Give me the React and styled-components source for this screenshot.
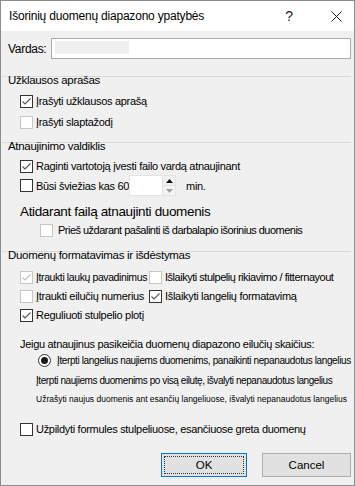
import styled, { createGlobalStyle } from "styled-components";

const GlobalStyle = createGlobalStyle`
  html, body {
    margin: 0;
    padding: 0;
    background: #ffffff;
  }
  body {
    font-family: "Liberation Sans", Arial, sans-serif;
    color: #000;
  }
`;

const Window = styled.div`
  width: 355px;
  height: 486px;
  box-sizing: border-box;
  border: 1px solid #8c8c8c;
  background: #f0f0f0;
  display: flex;
  flex-direction: column;
  font-size: 11px;
  letter-spacing: -0.3px;
`;

const TitleBar = styled.div`
  height: 30px;
  background: #ffffff;
  display: flex;
  align-items: center;
  padding-left: 8px;
  font-size: 12px;
  letter-spacing: -0.2px;
`;

const TitleText = styled.div`
  flex: 1;
`;

const TitleButton = styled.div`
  width: ${(p) => p.$w}px;
  height: 30px;
  display: flex;
  align-items: center;
  justify-content: center;
  font-size: 14px;
  color: #222;
`;

const Body = styled.div`
  flex: 1;
  display: flex;
  flex-direction: column;
  padding: 0 3px 0 7px;
`;

const Row = styled.div`
  display: flex;
  align-items: center;
  height: ${(p) => p.$h || 16}px;
  margin-top: ${(p) => p.$mt || 0}px;
  margin-left: ${(p) => p.$indent || 0}px;
  gap: ${(p) => (p.$gap === undefined ? 3 : p.$gap)}px;
  white-space: nowrap;
`;

const NameLabel = styled.span`
  width: 43px;
  font-size: 12px;
`;

const NameInput = styled.div`
  flex: 1;
  height: 21px;
  box-sizing: border-box;
  border: 1px solid #acacac;
  background: #fff;
  padding: 2px 3px;
`;

const NameBlur = styled.div`
  width: 74px;
  height: 13px;
  background: #efefef;
`;

const GroupHeader = styled.div`
  height: 16px;
  margin-top: ${(p) => p.$mt}px;
  margin-left: -6px;
  padding-left: 6px;
  display: flex;
  align-items: center;
  background: linear-gradient(#d9d9d9, #d9d9d9) no-repeat 0 4px / 100% 1px;
  white-space: nowrap;
`;

const HeaderText = styled.span`
  font-size: 11.5px;
`;

const Box = styled.span`
  width: 13px;
  height: 13px;
  flex: none;
  box-sizing: border-box;
  border: 1px solid ${(p) => (p.$disabled ? "#c6c6c6" : "#333")};
  background: #fff;
  display: flex;
  align-items: center;
  justify-content: center;
`;

const Check = ({ checked, disabled }) => (
  <Box $disabled={disabled}>
    {checked && (
      <svg width="11" height="11" viewBox="0 0 11 11">
        <path
          d="M1.5 5.5 L4 8 L9.5 2.5"
          fill="none"
          stroke={disabled ? "#bdbdbd" : "#555"}
          strokeWidth="1.1"
        />
      </svg>
    )}
  </Box>
);

const Radio = styled.span`
  width: 13px;
  height: 13px;
  flex: none;
  box-sizing: border-box;
  border-radius: 50%;
  border: 1px solid #333;
  background: #fff;
  display: flex;
  align-items: center;
  justify-content: center;
  &::after {
    content: "";
    width: 7px;
    height: 7px;
    border-radius: 50%;
    background: #1a1a1a;
  }
`;

const SpinBox = styled.div`
  display: flex;
  height: 21px;
  margin-left: -3px;
`;

const SpinField = styled.div`
  width: 33px;
  box-sizing: border-box;
  border: 1px solid #e3e3e3;
  border-right: none;
  background: #fff;
`;

const SpinButtons = styled.div`
  width: 14px;
  display: flex;
  flex-direction: column;
  border: 1px solid #e3e3e3;
  box-sizing: border-box;
  background: #fff;
`;

const SpinButton = styled.div`
  flex: 1;
  display: flex;
  align-items: center;
  justify-content: center;
  background: ${(p) => (p.$down ? "#f4f4f4" : "#f0f0f0")};
  border-bottom: ${(p) => (p.$down ? "none" : "1px solid #e3e3e3")};
`;

const Arrow = ({ down }) => (
  <svg width="7" height="4" viewBox="0 0 7 4">
    {down ? (
      <path d="M0 0 L7 0 L3.5 4 Z" fill="#a0a0a0" />
    ) : (
      <path d="M0 4 L7 4 L3.5 0 Z" fill="#111" />
    )}
  </svg>
);

const MinText = styled.span`
  margin-left: 7px;
`;

const BigText = styled.div`
  height: 18px;
  margin-top: 6px;
  margin-left: 12px;
  display: flex;
  align-items: center;
  font-size: 13.5px;
  letter-spacing: -0.35px;
  white-space: nowrap;
`;

const SmallText = styled.span`
  font-size: ${(p) => p.$size}px;
  letter-spacing: ${(p) => p.$ls}px;
`;

const FormatGrid = styled.div`
  display: grid;
  grid-template-columns: 129px 1fr;
  grid-auto-rows: 16px;
  row-gap: 3px;
  margin-top: 6px;
  margin-left: 12px;
`;

const Cell = styled.div`
  display: flex;
  align-items: center;
  gap: 3px;
  white-space: nowrap;
`;

const ButtonRow = styled.div`
  display: flex;
  justify-content: flex-end;
  gap: 15px;
  margin-top: 16px;
`;

const Button = styled.div`
  width: ${(p) => p.$w}px;
  height: 24px;
  box-sizing: border-box;
  border: 1px solid ${(p) => (p.$primary ? "#0078d7" : "#adadad")};
  background: #e1e1e1;
  padding: 2px;
  display: flex;
  font-size: 11.5px;
  letter-spacing: 0;
`;

const ButtonFace = styled.div`
  flex: 1;
  display: flex;
  align-items: center;
  justify-content: center;
  border: 1px dotted ${(p) => (p.$focus ? "#333" : "transparent")};
`;

export default function App() {
  return (
    <>
      <GlobalStyle />
      <Window>
        <TitleBar>
          <TitleText>Išorinių duomenų diapazono ypatybės</TitleText>
          <TitleButton $w={58}>?</TitleButton>
          <TitleButton $w={36}>
            <svg width="11" height="11" viewBox="0 0 11 11">
              <path d="M0.5 0.5 L10.5 10.5 M10.5 0.5 L0.5 10.5" stroke="#222" strokeWidth="1" />
            </svg>
          </TitleButton>
        </TitleBar>
        <Body>
          <Row $h={21} $mt={7} $gap={0}>
            <NameLabel>Vardas:</NameLabel>
            <NameInput>
              <NameBlur />
            </NameInput>
          </Row>

          <GroupHeader $mt={13}>
            <HeaderText>Užklausos aprašas</HeaderText>
          </GroupHeader>
          <Row $mt={5} $indent={12}>
            <Check checked />
            <span>Įrašyti užklausos aprašą</span>
          </Row>
          <Row $mt={5} $indent={12}>
            <Check disabled />
            <span>Įrašyti slaptažodį</span>
          </Row>

          <GroupHeader $mt={8}>
            <HeaderText>Atnaujinimo valdiklis</HeaderText>
          </GroupHeader>
          <Row $mt={4} $indent={12}>
            <Check checked />
            <span>Raginti vartotoją įvesti failo vardą atnaujinant</span>
          </Row>
          <Row $h={21} $mt={1} $indent={12}>
            <Check />
            <span>Būsi šviežias kas 60</span>
            <SpinBox>
              <SpinField />
              <SpinButtons>
                <SpinButton>
                  <Arrow />
                </SpinButton>
                <SpinButton $down>
                  <Arrow down />
                </SpinButton>
              </SpinButtons>
            </SpinBox>
            <MinText>min.</MinText>
          </Row>
          <BigText>Atidarant failą atnaujinti duomenis</BigText>
          <Row $h={14} $mt={3} $indent={32} $gap={5}>
            <Check disabled />
            <SmallText $size={11} $ls={-0.52}>
              Prieš uždarant pašalinti iš darbalapio išorinius duomenis
            </SmallText>
          </Row>

          <GroupHeader $mt={10}>
            <HeaderText>Duomenų formatavimas ir išdėstymas</HeaderText>
          </GroupHeader>
          <FormatGrid>
            <Cell>
              <Check checked disabled />
              <SmallText $size={10.5} $ls={-0.4}>
                Įtraukti laukų pavadinimus
              </SmallText>
            </Cell>
            <Cell>
              <Check disabled />
              <SmallText $size={11} $ls={-0.48}>
                Išlaikyti stulpelių rikiavimo / fitternayout
              </SmallText>
            </Cell>
            <Cell>
              <Check disabled />
              <span>Įtraukti eilučių numerius</span>
            </Cell>
            <Cell>
              <Check checked />
              <span>Išlaikyti langelių formatavimą</span>
            </Cell>
            <Cell>
              <Check checked />
              <span>Reguliuoti stulpelio plotį</span>
            </Cell>
          </FormatGrid>

          <Row $mt={13} $indent={12}>
            <span>Jeigu atnaujinus pasikeičia duomenų diapazono eilučių skaičius:</span>
          </Row>
          <Row $indent={30} $gap={6}>
            <Radio />
            <SmallText $size={10} $ls={-0.38}>
              Įterpti langelius naujiems duomenims, panaikinti nepanaudotus langelius
            </SmallText>
          </Row>
          <Row $mt={4} $indent={28}>
            <SmallText $size={10} $ls={-0.42}>
              Įterpti naujiems duomenims po visą eilutę, išvalyti nepanaudotus langelius
            </SmallText>
          </Row>
          <Row $h={14} $mt={4} $indent={28}>
            <SmallText $size={8.5} $ls={0}>
              Užrašyti naujus duomenis ant esančių langeliuose, išvalyti nepanaudotus langelius
            </SmallText>
          </Row>

          <Row $mt={15} $indent={12}>
            <Check />
            <span>Užpildyti formules stulpeliuose, esančiuose greta duomenų</span>
          </Row>

          <ButtonRow>
            <Button $primary $w={86}>
              <ButtonFace $focus>OK</ButtonFace>
            </Button>
            <Button $w={89}>
              <ButtonFace>Cancel</ButtonFace>
            </Button>
          </ButtonRow>
        </Body>
      </Window>
    </>
  );
}
